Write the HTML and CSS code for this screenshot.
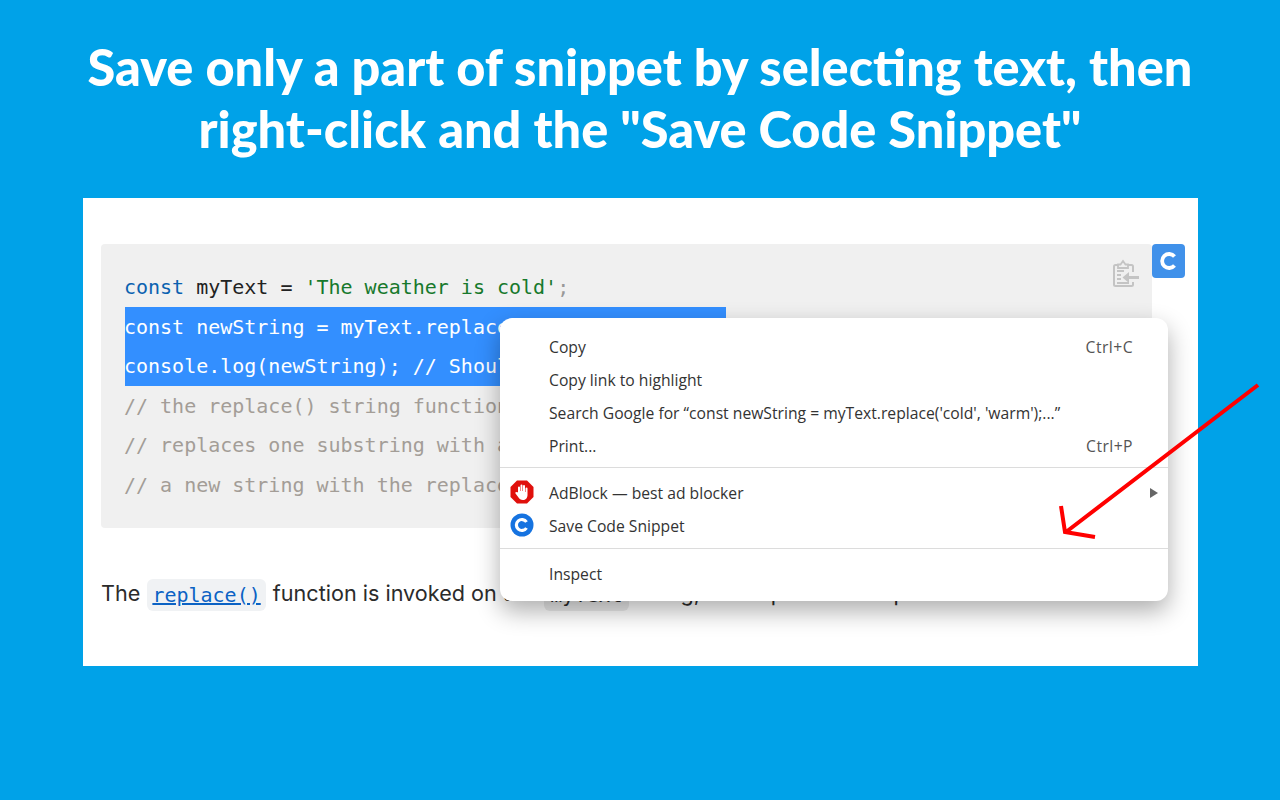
FILE: index.html
```html
<!DOCTYPE html>
<html lang="en">
<head>
<meta charset="UTF-8">
<title>Save Code Snippet</title>
<link rel="stylesheet" href="styles.css">
</head>
<body>
<h1 class="title">Save only a part of snippet by selecting text, then<br>right-click and the "Save Code Snippet"</h1>

<div class="panel">
  <div class="code-row">
    <pre class="code"><span class="line"><span class="kw">const</span> myText = <span class="str">'The weather is cold'</span><span class="pun">;</span></span>
<span class="line sel">const newString = myText.replace('cold', 'warm');&nbsp;</span>
<span class="line sel">console.log(newString); // Should be 'The weather is warm'</span>
<span class="line cmt">// the replace() string function takes two arguments and</span>
<span class="line cmt">// replaces one substring with another, then returns</span>
<span class="line cmt">// a new string with the replacement in place</span></pre>
    <svg class="copy-icon" viewBox="0 0 30 30" width="30" height="30" aria-hidden="true">
      <rect x="2" y="7" width="19" height="21" rx="1.500" fill="none" stroke="#c4c4c4" stroke-width="2"/>
      <path d="M6 10V6.500h2.500L11 3l2.500 3.500H16V10z" fill="#f0f0f0" stroke="#c4c4c4" stroke-width="1.800"/>
      <path d="M5 13h7M5 17h4M5 21h4M5 25h12" stroke="#c4c4c4" stroke-width="2"/>
      <rect x="10" y="14" width="18" height="10" fill="#f0f0f0"/>
      <path d="M27 19.500H15" stroke="#c4c4c4" stroke-width="3"/>
      <path d="M17 14l-6.500 5.500L17 25z" fill="#c4c4c4"/>
    </svg>
    <div class="ext-btn">
      <svg viewBox="0 0 34 34" width="34" height="34" aria-hidden="true">
        <path d="M22.500 12.500a7 7 0 1 0 0 9" fill="none" stroke="#fff" stroke-width="3.800"/>
      </svg>
    </div>
  </div>

  <p class="para">The <code class="chip"><a href="#">replace()</a></code> function is invoked on the <code class="chip plain">myText</code> string, and replaces the specified text.</p>

  <div class="menu">
    <div class="item"><span>Copy</span><span class="key">Ctrl+C</span></div>
    <div class="item"><span>Copy link to highlight</span></div>
    <div class="item"><span>Search Google for “const newString = myText.replace('cold', 'warm');...”</span></div>
    <div class="item"><span>Print...</span><span class="key">Ctrl+P</span></div>
    <div class="sep"></div>
    <div class="item">
      <svg class="item-icon" viewBox="0 0 24 24" width="24" height="24" aria-hidden="true">
        <path d="M7 .5h10L23.500 7v10L17 23.500H7L.5 17V7z" fill="#e0100c"/>
        <path d="M8 12V7.500a1 1 0 0 1 2 0V11h.5V5.500a1 1 0 0 1 2 0V11h.5V6a1 1 0 0 1 2 0v6h.5V8.500a1 1 0 0 1 2 0V15c0 3-2 5-4.500 5s-3.500-1-4.500-2.500L5.500 13.500c-.6-1 .8-2 1.500-1z" fill="#fff"/>
      </svg>
      <span>AdBlock — best ad blocker</span>
      <span class="caret"></span>
    </div>
    <div class="item">
      <svg class="item-icon" viewBox="0 0 24 24" width="24" height="24" aria-hidden="true">
        <circle cx="12" cy="12" r="11.500" fill="#1673e0"/>
        <path d="M16.500 9a5.500 5.500 0 1 0 0 6" fill="none" stroke="#fff" stroke-width="3.200"/>
      </svg>
      <span>Save Code Snippet</span>
    </div>
    <div class="sep sep-low"></div>
    <div class="item"><span>Inspect</span></div>
  </div>
</div>

<svg class="arrow" viewBox="0 0 1280 800" width="1280" height="800" aria-hidden="true">
  <path d="M1258 385L1066 532M1061 506L1065 532L1095 537" fill="none" stroke="#ff0000" stroke-width="4"/>
</svg>
</body>
</html>
```

FILE: styles.css
```css
* {
  box-sizing: border-box;
}

html,
body {
  height: 800px;
  overflow: hidden;
}

body {
  margin: 0;
  background-color: #00a2e8;
  font-family: "Inter", sans-serif;
  color: #2b2b2b;
}

.title {
  margin: 36px 0 38px;
  text-align: center;
  font-family: "Lato", sans-serif;
  font-size: 50.5px;
  font-weight: 900;
  line-height: 62px;
  color: #fff;
}

.panel {
  position: relative;
  width: 1115px;
  height: 468px;
  margin-left: 83px;
  padding: 46px 46px 0 18px;
  background-color: #fff;
}

.code-row {
  position: relative;
}

.code {
  margin: 0;
  height: 284px;
  padding: 23px 24px;
  border-radius: 4px;
  background-color: #f0f0f0;
  font-family: "DejaVu Sans Mono", monospace;
  font-size: 20px;
  line-height: 39.6px;
  letter-spacing: -0.01px;
  color: #222;
}

.line {
  display: inline-block;
  height: 39.6px;
  padding-top: 1px;
  text-indent: -1px;
  vertical-align: top;
}

.kw {
  color: #0b62b0;
}

.str {
  color: #17792c;
}

.pun {
  color: #999;
}

.cmt {
  color: #a39d97;
}

.sel {
  background-color: #338fff;
  color: #fff;
}

.copy-icon {
  position: absolute;
  top: 14px;
  right: 10px;
}

.ext-btn {
  position: absolute;
  top: 0;
  right: -33px;
  width: 33px;
  height: 34px;
  border-radius: 4px;
  background-color: #4091ea;
}

.para {
  margin: 49px 0 0;
  font-size: 21.6px;
  line-height: 32px;
  white-space: nowrap;
}

.chip {
  display: inline-block;
  margin: 0 1px;
  padding: 0 5px;
  border-radius: 6px;
  background-color: #f0f2f4;
  font-family: "DejaVu Sans Mono", monospace;
  font-size: 20px;
  vertical-align: -1px;
}

.chip a {
  color: #0b62c4;
}

.chip.plain {
  margin-left: 3px;
  padding: 0 6px;
  background-color: #ececec;
}

.menu {
  position: absolute;
  top: 120px;
  left: 417px;
  width: 668px;
  height: 283px;
  padding-top: 12px;
  border-radius: 12px;
  background-color: #fff;
  box-shadow: 0 10px 24px rgba(0, 0, 0, 0.32);
  font-family: "Open Sans", sans-serif;
  font-size: 15.7px;
  color: #333;
}

.item {
  position: relative;
  display: flex;
  justify-content: space-between;
  align-items: center;
  height: 33px;
  padding: 0 35px 0 49px;
}

.key {
  letter-spacing: 0.45px;
  color: #555;
}

.item-icon {
  position: absolute;
  top: 4px;
  left: 10px;
}

.caret {
  width: 0;
  height: 0;
  margin-right: -25px;
  border-top: 5px solid transparent;
  border-bottom: 5px solid transparent;
  border-left: 8px solid #666;
}

.sep {
  height: 1px;
  margin: 5px 0 8px;
  background-color: #dcdcdc;
}

.sep-low {
  margin-top: 6px;
}

.arrow {
  position: absolute;
  top: 0;
  left: 0;
}
```
